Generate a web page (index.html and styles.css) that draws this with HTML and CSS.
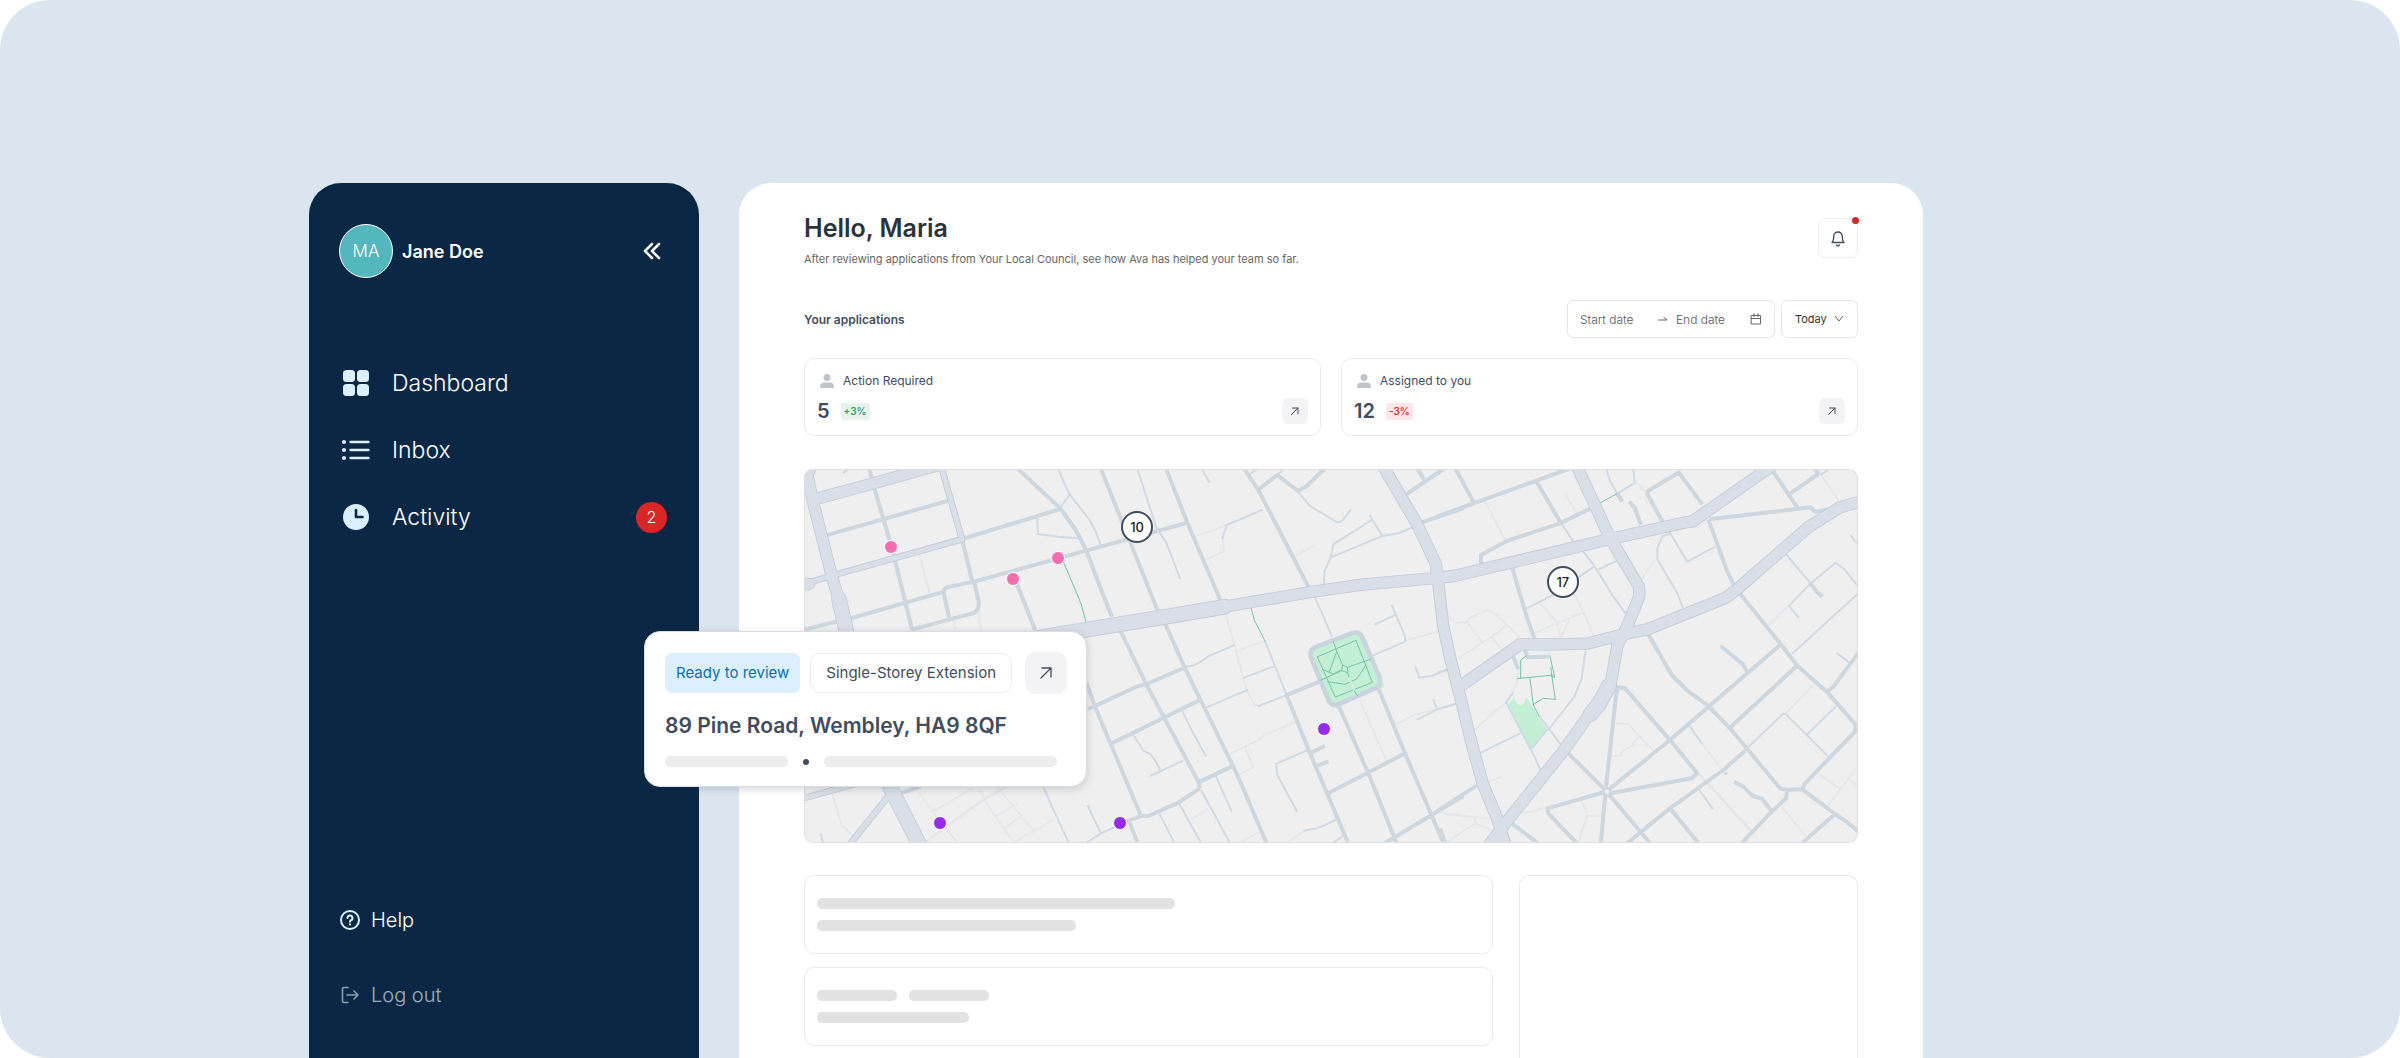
FILE: index.html
```html
<!DOCTYPE html>
<html lang="en">
<head>
    <meta charset="UTF-8">
    <meta name="viewport" content="width=device-width, initial-scale=1.0">
    <title>Dashboard</title>
    <link rel="stylesheet" href="styles.css">
</head>
<body>
    <div class="stage">
        <aside class="sidebar">
            <div class="profile">
                <span class="avatar">MA</span>
                <span class="profile-name">Jane Doe</span>
                <button class="collapse" type="button" aria-label="Collapse menu">
                    <svg width="20" height="20" viewBox="0 0 20 20"><path d="M10 3L3 10l7 7M17 3l-7 7 7 7"/></svg>
                </button>
            </div>
            <nav class="menu">
                <a href="#">
                    <svg width="28" height="28" viewBox="0 0 28 28"><rect x="1" y="1" width="12" height="12" rx="3.5"/><rect x="15" y="1" width="12" height="12" rx="3.5"/><rect x="1" y="15" width="12" height="12" rx="3.5"/><rect x="15" y="15" width="12" height="12" rx="3.5"/></svg>
                    Dashboard
                </a>
                <a href="#">
                    <svg width="28" height="28" viewBox="0 0 28 28"><circle cx="2" cy="6" r="2"/><circle cx="2" cy="14" r="2"/><circle cx="2" cy="22" r="2"/><path class="line" d="M8.500 6h18M8.500 14h18M8.500 22h18"/></svg>
                    Inbox
                </a>
                <a href="#">
                    <svg width="28" height="28" viewBox="0 0 28 28"><circle cx="14" cy="14" r="13"/><path class="hands" d="M14 7v7h6.500"/></svg>
                    Activity
                    <span class="count">2</span>
                </a>
            </nav>
            <nav class="menu-bottom">
                <a href="#">
                    <svg width="22" height="22" viewBox="0 0 22 22"><circle cx="11" cy="11" r="9"/><path d="M8.500 9a2.500 2.500 0 1 1 3.600 2.200c-.8.400-1.100.800-1.100 1.500M11 15.300v.200"/></svg>
                    Help
                </a>
                <a href="#" class="logout">
                    <svg width="22" height="22" viewBox="0 0 22 22"><path d="M9 3.500H5A1.500 1.500 0 0 0 3.500 5v12A1.500 1.500 0 0 0 5 18.500h4M8 11h11M15 7l4 4-4 4"/></svg>
                    Log out
                </a>
            </nav>
        </aside>

        <main class="main">
            <header class="header">
                <div>
                    <h1>Hello, Maria</h1>
                    <p>After reviewing applications from Your Local Council, see how Ava has helped your team so far.</p>
                </div>
                <button class="bell" type="button" aria-label="Notifications">
                    <svg width="18" height="18" viewBox="0 0 18 18"><path d="M3 13.500h12c-1.100-1-1.700-2.500-1.700-6.200a4.300 4.300 0 0 0-8.600 0c0 3.700-.600 5.200-1.700 6.200zM7.500 16c.800.800 2.200.800 3 0"/></svg>
                    <span class="bell-dot"></span>
                </button>
            </header>

            <div class="toolbar">
                <h2>Your applications</h2>
                <div class="date-range">
                    <input type="text" placeholder="Start date" aria-label="Start date">
                    <svg width="10" height="10" viewBox="0 0 10 10"><path d="M0 6h9L6 3.500"/></svg>
                    <input type="text" placeholder="End date" aria-label="End date">
                    <svg width="12" height="12" viewBox="0 0 12 12"><path d="M1.500 2.500h9v8.500h-9zM1.500 5.500h9M4 .5v3M8 .5v3"/></svg>
                </div>
                <div class="period">
                    <select aria-label="Period">
                        <option>Today</option>
                        <option>This week</option>
                    </select>
                    <svg width="10" height="10" viewBox="0 0 10 10"><path d="M1.500 2.500l3.500 4.500 3.500-4.500"/></svg>
                </div>
            </div>

            <div class="stats">
                <section class="stat">
                    <h3>
                        <svg width="14" height="14" viewBox="0 0 14 14"><circle cx="7" cy="3.500" r="3.500"/><path d="M0 14v-1.500C0 10 2 8.500 4.500 8.500h5c2.500 0 4.500 1.500 4.500 4V14z"/></svg>
                        Action Required
                    </h3>
                    <div class="stat-row">
                        <strong>5</strong>
                        <span class="change up">+3%</span>
                        <button class="open" type="button" aria-label="Open action required">
                            <svg width="10" height="10" viewBox="0 0 10 10"><path d="M1.500 8.500l6.500-6.500M2.500 2H8v5.500"/></svg>
                        </button>
                    </div>
                </section>
                <section class="stat">
                    <h3>
                        <svg width="14" height="14" viewBox="0 0 14 14"><circle cx="7" cy="3.500" r="3.500"/><path d="M0 14v-1.500C0 10 2 8.500 4.500 8.500h5c2.500 0 4.500 1.500 4.500 4V14z"/></svg>
                        Assigned to you
                    </h3>
                    <div class="stat-row">
                        <strong>12</strong>
                        <span class="change down">-3%</span>
                        <button class="open" type="button" aria-label="Open assigned to you">
                            <svg width="10" height="10" viewBox="0 0 10 10"><path d="M1.500 8.500l6.500-6.500M2.500 2H8v5.500"/></svg>
                        </button>
                    </div>
                </section>
            </div>

            <div class="map-wrap">
                <div class="map">
                    <svg class="map-tiles" viewBox="0 0 3162 1122">
                        <!-- west -->
                        <g transform="matrix(1.033 0 0 1 -42 -27)">
                            <path class="path" d="M375 283L405 398M475 483L482 510M548 455L555 520M122 998L150 1095L185 1130M370 990L415 1055L485 1147M415 1055L530 985M550 985L570 1030L650 1147M600 980L710 1115M600 1067L660 1030M625 1103L675 1065M650 1147L765 1080"/>
                            <path class="path wide" d="M390 1150L440 1110L560 1020L630 980"/>
                            <path class="lane" d="M718 175L720 222L780 230L835 235M775 20L810 100L870 180L888 215L902 255M812 105L785 142M735 980L770 1060L810 1150M865 1038L903 1120M855 1152L903 1120L950 1098M90 1123L96 1150M155 38L172 25"/>
                            <path class="street" d="M228 20L245 85L295 260L355 510M105 226L460 122M500 237L785 147M655 20L785 145L830 210L860 270L900 380L935 470M500 240L530 367M40 509L180 474L440 397L455 382L535 365L860 272L1155 188M445 395L463 475M535 368L548 425Q550 455 530 460L355 508M658 370L712 510M320 1000L380 980"/>
                            <path class="green-path" d="M795 308L845 430L860 487"/>
                        </g>
                        <!-- centre -->
                        <g transform="translate(768 -27)">
                            <path class="path" d="M412 228L500 195M488 235L492 275L440 298M708 287L758 259M498 465L560 690L585 735L600 740M532 573L612 543M508 882L600 838L612 825L704 787M555 863L580 922L540 943M395 1077L445 1045M540 1147L600 1115M685 1147L733 1112M900 722L980 905M1010 793L1060 765L1120 750M1040 540L1135 515M1145 1055L1160 1063L1200 1064M1160 1147L1200 1120"/>
                            <path class="lane" d="M606 150L500 195L487 235M230 20L290 205L320 250L360 355M425 27L447 65M714 95L750 138L830 186Q845 190 855 172L871 151M565 45L592 28M652 45L672 27M930 167L967 228M935 180L820 253L812 292L793 335L792 375M812 292L967 228L1018 219L1057 202M765 412L815 527M615 543L680 706M380 620L405 615L450 587L523 555M552 653L640 620M440 742L562 690M595 738L678 706M945 493L1005 465M996 437L1035 528L1035 545L940 586M1067 622L1078 653L1115 648L1162 628M1120 720L1132 748M1073 778L1132 748L1190 730M368 755L400 820L437 888M222 828L250 872L272 883L285 900L300 930M272 947L368 903M742 870L648 912L652 945L710 1053M468 950L514 1052M425 993L510 1150M357 1030L424 1150M298 1060L344 1150M733 1112L772 1105L830 1078M815 1150L850 1128"/>
                            <path class="street" d="M120 20L212 250L293 452M316 20L382 188L482 422M548 20L595 90L747 384M595 88L652 45L714 93L740 78L800 20M1068 20L1092 58M1040 102L1155 24M1085 187L1210 145M80 670L105 740L243 1068M180 510L260 675L415 965L420 985M315 490L375 625L520 920L545 975L622 1155M85 747L230 680L260 672L330 642L375 622M155 850L420 720M415 967L515 920M420 985L355 1028L265 1068L243 1068L180 1092M208 1085L235 1155M678 706L785 662M680 706L750 880L867 1155M805 1000L1035 880M750 880L795 857M770 918L805 905M835 735L925 940L1010 1150M955 685L1035 880L1153 1155M965 1155L1115 1065L1210 1008"/>
                            <path class="green" d="M955 690l17-24v14z"/>
                            <path class="square" d="M752 590Q748 568 770 560L880 518Q898 514 906 530L960 655Q964 676 945 685L832 735Q814 738 806 722Z"/>
                            <path class="green-path" d="M773 590L888 541L937 667L827 711ZM820 545L830 575L848 615L862 622L930 598M830 575L808 636M848 615L846 628L820 642L788 628M783 660L846 632L862 638L867 650M862 622L864 636M803 665L855 673L890 657L918 615M880 688L892 707M573 443L583 480L615 543"/>
                            <path class="path" d="M868 655L882 690"/>
                        </g>
                        <!-- east -->
                        <g transform="translate(1908 -27)">
                            <path class="green" d="M205 732L218 720L222 708L230 730Q240 740 252 730L258 710L275 735L320 808L273 868Z"/>
                            <path class="path" d="M135 125L195 240M375 100L410 160M1148 50L1195 120M585 68L622 100M300 430L350 485L362 535M285 518L430 457M362 535L388 480M405 405L430 455L462 530M28 470L50 490L80 485L95 470L143 450L175 470L245 538M80 485L128 548M200 495L155 530L187 570M155 530L50 598M607 355L625 325L650 297M985 495L1045 437M108 805L198 727M145 965L185 950M530 790L565 792L597 828L575 858L550 870L540 887L515 888M597 828L640 872M785 850L855 940M1120 675L1038 760M1130 937L1198 985M1253 920L1165 1035M1225 958L1255 978M1025 1040L1095 1125M425 1022L442 1065L415 1147M442 1067L485 1068M0 1055L25 1063L145 1075M103 1073L105 1090L155 1110M105 1090L20 1147M175 1053L270 1057L320 1040M235 630L230 670L218 700M328 570L328 590"/>
                            <path class="path wide" d="M780 945L940 1120"/>
                            <path class="lane" d="M362 188L402 247M497 20L510 62L530 98M578 20L585 68L533 100M1143 44L1168 27M430 275L465 320L520 410L558 462M478 327L532 302M260 445L330 410L462 320M690 218L742 305L822 262M690 222L667 228L652 265L652 298L712 400L728 442M1040 285L1112 370L1187 308L1215 330L1255 380M1112 370L1047 437L1075 472M1255 400L1058 580M1193 581L1228 608M1233 227L1245 245L1255 249M915 870L1028 763L1038 763L1162 887M1100 825L1187 740M748 797L785 850M437 570L425 655L403 710L325 810M298 768L362 853M323 808L273 868L305 937M200 730L273 870M198 727L218 700M123 878L240 820M-5 747L45 732M-5 637L20 630M778 990L817 1045"/>
                            <path class="street" d="M43 20L100 125M-10 170L385 27L400 20M290 65L362 188M452 145L360 190L200 243L123 285L123 315M217 325L260 470L283 535M715 35L787 133M718 37L625 92L622 102L669 188M1000 35L1072 142M1052 100L1135 42M1122 24L1137 44M808 178L1112 142L1125 155L1185 145M568 125L585 145L603 195M530 98L547 125M805 178L860 330L884 380M898 398L1020 550L1070 615L1160 695L1248 795L1245 815L1095 970L1087 988L1042 990L1020 985L870 805L805 738L740 690L695 645L625 523M1042 990L1038 1015L995 1055L900 1155M1020 555L690 840L505 990M1070 618L868 805M915 873L850 930L690 1045L555 1155M530 695L535 682L555 685L690 840L772 940L755 955L505 1001M530 690L497 990L482 1155M385 880L500 995L635 1155M495 996L322 1045L325 1060L415 1155M690 1045L780 1155M1087 988L1185 1062L1215 1082L1260 1118M1185 1062L1080 1155M1160 697L1180 680L1258 575M842 558L908 612L922 635M-10 1054L110 977M215 1090L300 1155M0 1105L18 1155M253 570L265 592L325 590M220 590L235 628M1112 370L1130 395L1147 410M882 965L910 980L938 1008L965 1015L995 1053"/>
                            <circle class="roundabout" cx="500" cy="995" r="11"/>
                            <circle class="dot" cx="858" cy="941" r="5"/>
                            <path class="green-path" d="M481 128L530 102M258 588L242 600L242 655M232 656L340 645M330 588L344 652L335 650L333 622M270 655L280 735L297 768M335 645L346 718L310 715L280 733"/>
                        </g>
                        <!-- main roads: outline first, then the surface on top -->
                        <g class="road-edge">
                            <g id="roads">
                                <path class="a-road" d="M35 90L216 41L400 -11M-10 345L15 345M30 -30L10 20L30 110L84 323L108 403L123 488L258 953L345 1135M1736 -10L1838 163L1895 283L1903 343L1918 473L1940 573L1966 673L2003 823L2036 943L2083 1058L2108 1140"/>
                                <path class="a-road broad" d="M245 920L258 953L350 1135M105 390L130 500L200 720M600 526L768 495L1068 446L1263 413"/>
                                <path class="a-road" d="M1263 413L1308 405L1520 369L1673 347L1883 328L1950 321L2418 210L2640 161L2666 157L2886 3L2930 -28M2313 -20L2418 207L2505 353L2506 382L2468 475L2440 530L2420 645L2350 745L2275 850L2110 1055L2050 1135M1974 648L2148 526L2248 526L2348 524L2463 495L2533 480L2766 386L2800 360L3015 173L3108 115L3180 94"/>
                                <path class="a-road broad" d="M2415 650L2385 705L2360 735"/>
                                <path class="b-road" d="M-10 348L84 320L474 211M408 -20L474 211M-10 990L150 946M130 1135L250 985"/>
                            </g>
                        </g>
                        <use class="road-top" href="#roads"/>
                    </svg>
                    <span class="pin pink p1"></span>
                    <span class="pin pink p2"></span>
                    <span class="pin pink p3"></span>
                    <span class="pin purple p4"></span>
                    <span class="pin purple p5"></span>
                    <span class="pin purple p6"></span>
                    <button class="cluster c1" type="button">10</button>
                    <button class="cluster c2" type="button">17</button>
                </div>

                <article class="popup">
                    <div class="popup-tags">
                        <span class="tag ready">Ready to review</span>
                        <span class="tag">Single-Storey Extension</span>
                        <button class="open large" type="button" aria-label="Open application">
                            <svg width="14" height="14" viewBox="0 0 14 14"><path d="M2 12L12 2M3 2h9v9"/></svg>
                        </button>
                    </div>
                    <h3>89 Pine Road, Wembley, HA9 8QF</h3>
                    <div class="popup-meta">
                        <span class="bar light short"></span>
                        <span class="bullet"></span>
                        <span class="bar light grow"></span>
                    </div>
                </article>
            </div>

            <div class="placeholders">
                <div class="placeholder-list">
                    <div class="placeholder">
                        <div class="bar w-long"></div>
                        <div class="bar w-medium"></div>
                    </div>
                    <div class="placeholder">
                        <div class="bar-pair">
                            <div class="bar w-tiny"></div>
                            <div class="bar w-tiny"></div>
                        </div>
                        <div class="bar w-small"></div>
                    </div>
                </div>
                <div class="placeholder-side"></div>
            </div>
        </main>
    </div>
</body>
</html>
```

FILE: styles.css
```css
* {
    box-sizing: border-box;
}
body {
    margin: 0;
    background: #fff;
    font-family: Inter, "Liberation Sans", sans-serif;
    color: #414d5f;
}
h1, h2, h3, p {
    margin: 0;
}
button, input, select {
    font-family: inherit;
    padding: 0;
    border: 0;
    background: none;
}
a {
    color: inherit;
    text-decoration: none;
}
svg {
    display: block;
    flex: none;
    fill: none;
    stroke: currentColor;
    stroke-linecap: round;
    stroke-linejoin: round;
}
.stage {
    display: flex;
    gap: 40px;
    height: 100vh;
    padding: 183px 477px 0 309px;
    overflow: hidden;
    border-radius: 50px;
    background: #dbe5ef;
}

/* sidebar */
.sidebar {
    display: flex;
    flex-direction: column;
    flex: none;
    width: 390px;
    padding: 41px 32px 48px 30px;
    border-radius: 32px 32px 0 0;
    background: #0a2845;
    color: #fff;
}
.profile {
    display: flex;
    align-items: center;
    gap: 9px;
}
.avatar {
    display: flex;
    align-items: center;
    justify-content: center;
    width: 54px;
    height: 54px;
    border: 1px solid #fff;
    border-radius: 50%;
    background: #55b7be;
    font-size: 17px;
    font-weight: 300;
}
.profile-name {
    font-size: 18px;
    font-weight: 600;
}
.collapse {
    margin: 0 5px 0 auto;
    color: #fff;
    stroke-width: 2.5;
}
.menu {
    display: flex;
    flex-direction: column;
    gap: 31px;
    margin-top: 87px;
}
.menu a {
    display: flex;
    align-items: center;
    gap: 22px;
    height: 36px;
    padding-left: 3px;
    font-size: 23px;
    font-weight: 300;
}
.menu svg {
    fill: #dceffe;
    stroke: none;
}
.menu .line {
    stroke: #dceffe;
    stroke-width: 2.4;
}
.menu .hands {
    fill: none;
    stroke: #0a2845;
    stroke-width: 2.6;
}
.count {
    display: flex;
    align-items: center;
    justify-content: center;
    width: 31px;
    height: 31px;
    margin-left: auto;
    border-radius: 50%;
    background: #dc2626;
    font-size: 16px;
}
.menu-bottom {
    display: flex;
    flex-direction: column;
    gap: 45px;
    margin-top: auto;
}
.menu-bottom a {
    display: flex;
    align-items: center;
    gap: 10px;
    height: 30px;
    font-size: 20px;
    font-weight: 300;
    stroke-width: 2;
}
.menu-bottom svg {
    color: #dceffe;
}
.menu-bottom .logout {
    opacity: .6;
    stroke-width: 1.6;
}

/* main panel */
.main {
    display: flex;
    flex-direction: column;
    flex: 1;
    min-width: 0;
    padding: 28px 65px 0;
    border-radius: 32px 32px 0 0;
    background: #fff;
}
.header {
    display: flex;
    justify-content: space-between;
}
.header h1 {
    font-size: 25px;
    line-height: 34px;
    font-weight: 600;
    color: #2b323a;
}
.header p {
    margin-top: 6px;
    font-size: 11px;
    line-height: 16px;
    color: #666;
}
.bell {
    position: relative;
    display: flex;
    align-items: center;
    justify-content: center;
    width: 40px;
    height: 40px;
    margin-top: 7px;
    border: 1px solid #ededf0;
    border-radius: 7px;
    color: #414d5f;
    stroke-width: 1.3;
}
.bell-dot {
    position: absolute;
    top: -2px;
    right: -2px;
    width: 7px;
    height: 7px;
    border-radius: 50%;
    background: #dc2626;
}
.toolbar {
    display: flex;
    align-items: center;
    gap: 6px;
    margin-top: 33px;
    color: #666;
}
.toolbar h2 {
    margin-right: auto;
    font-size: 12px;
    font-weight: 600;
    color: #414d5f;
}
.date-range, .period {
    display: flex;
    align-items: center;
    height: 38px;
    border: 1px solid #e6e6e8;
    border-radius: 6px;
}
.date-range {
    width: 208px;
    gap: 8px;
    padding: 0 12px;
}
.date-range input {
    flex: 1 1 71px;
    min-width: 0;
    font-size: 12px;
    font-weight: 300;
    color: #666;
}
.date-range input + svg + input {
    flex-basis: 67px;
}
.date-range input::placeholder {
    color: #555;
    opacity: 1;
}
.period {
    width: 77px;
    padding: 0 13px;
    justify-content: space-between;
}
.period select {
    appearance: none;
    width: 38px;
    font-size: 11px;
    color: #333;
}
.stats {
    display: grid;
    grid-template-columns: 1fr 1fr;
    gap: 20px;
    margin-top: 20px;
}
.stat {
    padding: 11px 12px;
    border: 1px solid #e9e9eb;
    border-radius: 10px;
}
.stat h3 {
    display: flex;
    align-items: center;
    gap: 9px;
    padding-left: 3px;
    font-size: 12px;
    line-height: 22px;
    font-weight: 400;
}
.stat h3 svg {
    fill: #bfc3cb;
    stroke: none;
}
.stat-row {
    display: flex;
    align-items: center;
    gap: 11px;
    margin-top: 6px;
}
.stat-row strong {
    font-size: 20px;
    line-height: 26px;
    font-weight: 600;
}
.change {
    padding: 0 3px;
    border-radius: 2px;
    font-size: 10px;
    line-height: 17px;
    font-weight: 600;
}
.up {
    background: #e8f3ee;
    color: #2ba05c;
}
.down {
    background: #fde6e7;
    color: #dc2f2f;
}
.open {
    display: flex;
    align-items: center;
    justify-content: center;
    width: 26px;
    height: 26px;
    margin-left: auto;
    border-radius: 6px;
    background: #f3f3f6;
    color: #414d5f;
}
.open.large {
    width: 42px;
    height: 42px;
    border-radius: 10px;
    stroke-width: 1.3;
}

/* map */
.map-wrap {
    position: relative;
    margin-top: 33px;
}
.map {
    position: relative;
    overflow: hidden;
    border-radius: 9px;
    background: #efefef;
}
.map::after {
    content: "";
    position: absolute;
    inset: 0;
    border: 1px solid #dddfe2;
    border-radius: 9px;
    pointer-events: none;
}
.map-tiles {
    width: 100%;
    height: auto;
}
.path {
    stroke: #e4e6e9;
    stroke-width: 5;
}
.path.wide {
    stroke-width: 8;
}
.lane {
    stroke: #cfdae5;
    stroke-width: 6;
}
.street {
    stroke: #ccd7e0;
    stroke-width: 12;
    stroke-linecap: butt;
}
.green-path {
    stroke: #74c5ab;
    stroke-width: 3;
}
.green {
    fill: #c3f0d5;
    stroke: none;
}
.square {
    fill: #c3f0d5;
    stroke: #c9d4df;
    stroke-width: 14;
}
.roundabout {
    fill: #efefef;
    stroke: #ccd7e0;
    stroke-width: 8;
}
.dot {
    fill: #ccd7e0;
    stroke: none;
}
.road-edge {
    --edge: 5px;
    stroke: #c0cbd5;
}
.road-top {
    --edge: 0px;
    stroke: #d8dfe8;
}
.a-road {
    stroke-width: calc(32px + var(--edge));
}
.a-road.broad {
    stroke-width: calc(42px + var(--edge));
}
.b-road {
    stroke-width: calc(15px + var(--edge));
}
.pin {
    position: absolute;
    width: 14px;
    height: 14px;
    margin: -7px 0 0 -7px;
    border: 1px solid #fff;
    border-radius: 50%;
}
.pink {
    background: #f56cb0;
}
.purple {
    background: #952bee;
}
.p1 { left: 8.3%; top: 20.8%; }
.p2 { left: 19.8%; top: 29.4%; }
.p3 { left: 24.1%; top: 23.8%; }
.p4 { left: 12.9%; top: 94.6%; }
.p5 { left: 30%; top: 94.6%; }
.p6 { left: 49.3%; top: 69.6%; }
.cluster {
    position: absolute;
    width: 32px;
    height: 32px;
    margin: -16px 0 0 -16px;
    border: 2px solid #414d5f;
    border-radius: 50%;
    background: #fff;
    font-size: 13px;
    font-weight: 500;
    color: #222;
}
.c1 { left: 31.6%; top: 15.6%; }
.c2 { left: 72%; top: 30.2%; }

/* application card over the map */
.popup {
    position: absolute;
    left: -160px;
    top: 162px;
    width: 443px;
    padding: 20px 19px 19px 20px;
    border: 1px solid #dadce3;
    border-radius: 16px;
    background: #fff;
    box-shadow: 0 2px 8px rgba(30, 40, 60, .18);
}
.popup-tags {
    display: flex;
    align-items: center;
    gap: 10px;
}
.tag {
    height: 40px;
    padding: 0 15px;
    border: 1px solid #ececee;
    border-radius: 10px;
    font-size: 15px;
    line-height: 38px;
    white-space: nowrap;
}
.tag.ready {
    padding: 0 10px;
    border-color: #dceffe;
    border-radius: 7px;
    background: #dceffe;
    color: #0b6fae;
}
.popup h3 {
    margin-top: 18px;
    font-size: 21px;
    line-height: 28px;
    font-weight: 600;
    white-space: nowrap;
}
.popup-meta {
    display: flex;
    align-items: center;
    gap: 15px;
    margin-top: 16px;
    padding-right: 10px;
}
.bullet {
    width: 6px;
    height: 6px;
    border-radius: 50%;
    background: #414d5f;
}

/* loading placeholders */
.bar {
    height: 11px;
    border-radius: 5px;
    background: #e2e2e2;
}
.bar.light {
    background: #ededed;
}
.short {
    width: 123px;
}
.grow {
    flex: 1;
}
.w-long {
    width: 54%;
}
.w-medium {
    width: 39%;
}
.w-small {
    width: 23%;
}
.w-tiny {
    width: 80px;
}
.placeholders {
    display: grid;
    grid-template-columns: 689fr 339fr;
    gap: 26px;
    flex: 1;
    margin-top: 32px;
}
.placeholder-list {
    display: flex;
    flex-direction: column;
    gap: 13px;
}
.placeholder {
    display: flex;
    flex-direction: column;
    gap: 11px;
    padding: 22px 12px;
    border: 1px solid #e9e9eb;
    border-radius: 10px;
}
.bar-pair {
    display: flex;
    gap: 12px;
}
.placeholder-side {
    border: 1px solid #e9e9eb;
    border-bottom: 0;
    border-radius: 10px 10px 0 0;
}
```
